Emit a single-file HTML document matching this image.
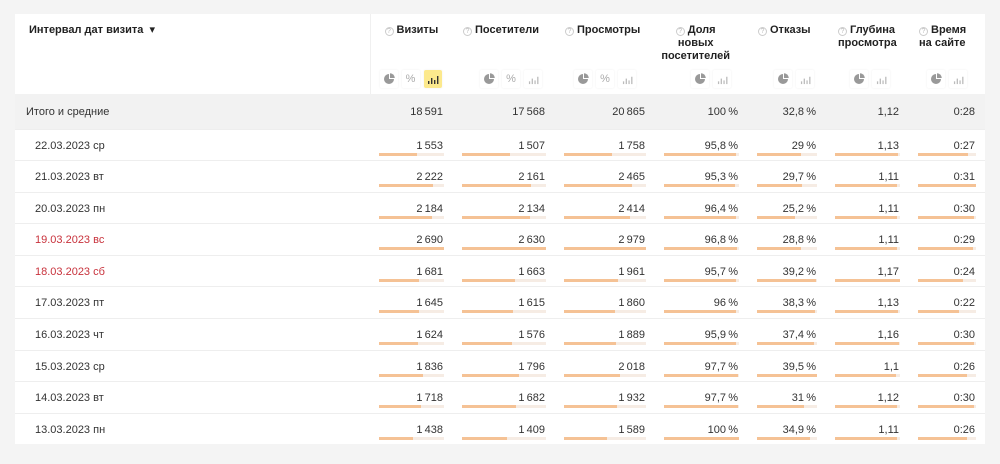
<!DOCTYPE html>
<html><head><meta charset="utf-8"><style>
*{margin:0;padding:0;box-sizing:border-box}
body{width:1000px;height:464px;background:#f4f4f4;font-family:"Liberation Sans","DejaVu Sans",sans-serif;color:#222;overflow:hidden;position:relative}
.card{position:absolute;left:15px;top:14px;width:970px;height:430px;background:#fff}
table{position:absolute;left:15px;top:14px;border-collapse:collapse;table-layout:fixed;width:970px}
td,th{padding:0 10px;font-size:11px;text-align:right;vertical-align:top}
th{height:80px;font-weight:bold;padding-top:10px;line-height:13px;position:relative}
th.l{text-align:left;padding-left:14px;border-right:1px solid #f0f0f0}
th.h{text-align:left}
.q{display:inline-block;width:9px;height:9px;border:1px solid #ccc;border-radius:50%;font-size:7px;color:#bbb;line-height:8px;text-align:center;font-weight:normal;vertical-align:0;margin-right:3px}
.ic{position:absolute;top:56px;display:flex;gap:4px}
.ic span{width:18px;height:18px;display:flex;align-items:center;justify-content:center;color:#aaa;font-size:11px;font-weight:normal;box-shadow:0 0 2px #eee;border-radius:2px}
.ic span.a{background:#fce98d}
tr.tot td{background:#f2f2f2;height:35px;padding-top:12px;color:#333}
tr.tot td.l{text-align:left;padding-left:11px}
tr.r td{height:31.6px;padding-top:10px;border-top:1px solid #eee;position:relative;color:#333}
tr.r td.l{text-align:left;padding-left:20px;color:#333}
tr.r td.red{color:#c8323c}
.b{position:absolute;left:9px;right:9px;top:23px;height:3px;background:#f6ece4}
.b i{display:block;height:3px;background:#f5c295}
</style></head><body>
<svg width="0" height="0" style="position:absolute"><defs>
<symbol id="pie" viewBox="0 0 12 12"><path d="M6 1A5 5 0 1 0 11 6H6Z" fill="#999"/><path d="M7 0.2A5 5 0 0 1 11.8 5H7Z" fill="#999"/></symbol>
<symbol id="bar" viewBox="0 0 12 12"><rect x="1" y="8" width="1.4" height="3" fill="currentColor"/><rect x="4" y="5" width="1.4" height="6" fill="currentColor"/><rect x="7" y="7" width="1.4" height="4" fill="currentColor"/><rect x="10" y="3" width="1.4" height="8" fill="currentColor"/></symbol>
</defs></svg>
<div class="card"></div>
<table>
<colgroup><col style="width:355px"><col style="width:83px"><col style="width:102px"><col style="width:100px"><col style="width:93px"><col style="width:78px"><col style="width:83px"><col style="width:76px"></colgroup>
<tr>
<th class="l">Интервал дат визита&nbsp; ▾</th>
<th class="h" style="padding-left:14px"><span class="q">?</span>Визиты<div class="ic" style="left:9px"><span><svg width="12" height="12"><use href="#pie"/></svg></span><span>%</span><span class="a" style="color:#333"><svg width="12" height="12"><use href="#bar"/></svg></span></div></th>
<th class="h"><span class="q">?</span>Посетители<div class="ic" style="left:27px"><span><svg width="12" height="12"><use href="#pie"/></svg></span><span>%</span><span style="color:#bbb"><svg width="11" height="11"><use href="#bar"/></svg></span></div></th>
<th class="h"><span class="q">?</span>Просмотры<div class="ic" style="left:19px"><span><svg width="12" height="12"><use href="#pie"/></svg></span><span>%</span><span style="color:#bbb"><svg width="11" height="11"><use href="#bar"/></svg></span></div></th>
<th style="padding-right:0"><div style="position:absolute;right:18px;text-align:center"><span class="q">?</span>Доля<br>новых<br>посетителей</div><div class="ic" style="left:36px"><span><svg width="12" height="12"><use href="#pie"/></svg></span><span style="color:#bbb"><svg width="11" height="11"><use href="#bar"/></svg></span></div></th>
<th class="h" style="padding-left:10px"><span class="q">?</span>Отказы<div class="ic" style="left:26px"><span><svg width="12" height="12"><use href="#pie"/></svg></span><span style="color:#bbb"><svg width="11" height="11"><use href="#bar"/></svg></span></div></th>
<th class="h" style="padding-left:12px"><span class="q">?</span>Глубина<br>просмотра<div class="ic" style="left:24px"><span><svg width="12" height="12"><use href="#pie"/></svg></span><span style="color:#bbb"><svg width="11" height="11"><use href="#bar"/></svg></span></div></th>
<th class="h" style="padding-left:10px"><span class="q">?</span>Время<br>на сайте<div class="ic" style="left:18px"><span><svg width="12" height="12"><use href="#pie"/></svg></span><span style="color:#bbb"><svg width="11" height="11"><use href="#bar"/></svg></span></div></th>
</tr>
<tr class="tot"><td class="l">Итого и средние</td><td>18&#8239;591</td><td>17&#8239;568</td><td>20&#8239;865</td><td>100&#8239;%</td><td>32,8&#8239;%</td><td>1,12</td><td>0:28</td></tr>
<tr class="r"><td class="l">22.03.2023 ср</td><td>1&#8239;553<div class="b"><i style="width:58%"></i></div></td><td>1&#8239;507<div class="b"><i style="width:57%"></i></div></td><td>1&#8239;758<div class="b"><i style="width:59%"></i></div></td><td>95,8&#8239;%<div class="b"><i style="width:96%"></i></div></td><td>29&#8239;%<div class="b"><i style="width:73%"></i></div></td><td>1,13<div class="b"><i style="width:97%"></i></div></td><td>0:27<div class="b"><i style="width:87%"></i></div></td></tr>
<tr class="r"><td class="l">21.03.2023 вт</td><td>2&#8239;222<div class="b"><i style="width:83%"></i></div></td><td>2&#8239;161<div class="b"><i style="width:82%"></i></div></td><td>2&#8239;465<div class="b"><i style="width:83%"></i></div></td><td>95,3&#8239;%<div class="b"><i style="width:95%"></i></div></td><td>29,7&#8239;%<div class="b"><i style="width:75%"></i></div></td><td>1,11<div class="b"><i style="width:95%"></i></div></td><td>0:31<div class="b"><i style="width:100%"></i></div></td></tr>
<tr class="r"><td class="l">20.03.2023 пн</td><td>2&#8239;184<div class="b"><i style="width:81%"></i></div></td><td>2&#8239;134<div class="b"><i style="width:81%"></i></div></td><td>2&#8239;414<div class="b"><i style="width:81%"></i></div></td><td>96,4&#8239;%<div class="b"><i style="width:96%"></i></div></td><td>25,2&#8239;%<div class="b"><i style="width:64%"></i></div></td><td>1,11<div class="b"><i style="width:95%"></i></div></td><td>0:30<div class="b"><i style="width:97%"></i></div></td></tr>
<tr class="r"><td class="l red">19.03.2023 вс</td><td>2&#8239;690<div class="b"><i style="width:100%"></i></div></td><td>2&#8239;630<div class="b"><i style="width:100%"></i></div></td><td>2&#8239;979<div class="b"><i style="width:100%"></i></div></td><td>96,8&#8239;%<div class="b"><i style="width:97%"></i></div></td><td>28,8&#8239;%<div class="b"><i style="width:73%"></i></div></td><td>1,11<div class="b"><i style="width:95%"></i></div></td><td>0:29<div class="b"><i style="width:94%"></i></div></td></tr>
<tr class="r"><td class="l red">18.03.2023 сб</td><td>1&#8239;681<div class="b"><i style="width:62%"></i></div></td><td>1&#8239;663<div class="b"><i style="width:63%"></i></div></td><td>1&#8239;961<div class="b"><i style="width:66%"></i></div></td><td>95,7&#8239;%<div class="b"><i style="width:96%"></i></div></td><td>39,2&#8239;%<div class="b"><i style="width:99%"></i></div></td><td>1,17<div class="b"><i style="width:100%"></i></div></td><td>0:24<div class="b"><i style="width:77%"></i></div></td></tr>
<tr class="r"><td class="l">17.03.2023 пт</td><td>1&#8239;645<div class="b"><i style="width:61%"></i></div></td><td>1&#8239;615<div class="b"><i style="width:61%"></i></div></td><td>1&#8239;860<div class="b"><i style="width:62%"></i></div></td><td>96&#8239;%<div class="b"><i style="width:96%"></i></div></td><td>38,3&#8239;%<div class="b"><i style="width:97%"></i></div></td><td>1,13<div class="b"><i style="width:97%"></i></div></td><td>0:22<div class="b"><i style="width:71%"></i></div></td></tr>
<tr class="r"><td class="l">16.03.2023 чт</td><td>1&#8239;624<div class="b"><i style="width:60%"></i></div></td><td>1&#8239;576<div class="b"><i style="width:60%"></i></div></td><td>1&#8239;889<div class="b"><i style="width:63%"></i></div></td><td>95,9&#8239;%<div class="b"><i style="width:96%"></i></div></td><td>37,4&#8239;%<div class="b"><i style="width:95%"></i></div></td><td>1,16<div class="b"><i style="width:99%"></i></div></td><td>0:30<div class="b"><i style="width:97%"></i></div></td></tr>
<tr class="r"><td class="l">15.03.2023 ср</td><td>1&#8239;836<div class="b"><i style="width:68%"></i></div></td><td>1&#8239;796<div class="b"><i style="width:68%"></i></div></td><td>2&#8239;018<div class="b"><i style="width:68%"></i></div></td><td>97,7&#8239;%<div class="b"><i style="width:98%"></i></div></td><td>39,5&#8239;%<div class="b"><i style="width:100%"></i></div></td><td>1,1<div class="b"><i style="width:94%"></i></div></td><td>0:26<div class="b"><i style="width:84%"></i></div></td></tr>
<tr class="r"><td class="l">14.03.2023 вт</td><td>1&#8239;718<div class="b"><i style="width:64%"></i></div></td><td>1&#8239;682<div class="b"><i style="width:64%"></i></div></td><td>1&#8239;932<div class="b"><i style="width:65%"></i></div></td><td>97,7&#8239;%<div class="b"><i style="width:98%"></i></div></td><td>31&#8239;%<div class="b"><i style="width:78%"></i></div></td><td>1,12<div class="b"><i style="width:96%"></i></div></td><td>0:30<div class="b"><i style="width:97%"></i></div></td></tr>
<tr class="r"><td class="l">13.03.2023 пн</td><td>1&#8239;438<div class="b"><i style="width:53%"></i></div></td><td>1&#8239;409<div class="b"><i style="width:54%"></i></div></td><td>1&#8239;589<div class="b"><i style="width:53%"></i></div></td><td>100&#8239;%<div class="b"><i style="width:100%"></i></div></td><td>34,9&#8239;%<div class="b"><i style="width:88%"></i></div></td><td>1,11<div class="b"><i style="width:95%"></i></div></td><td>0:26<div class="b"><i style="width:84%"></i></div></td></tr>
</table>
</body></html>
